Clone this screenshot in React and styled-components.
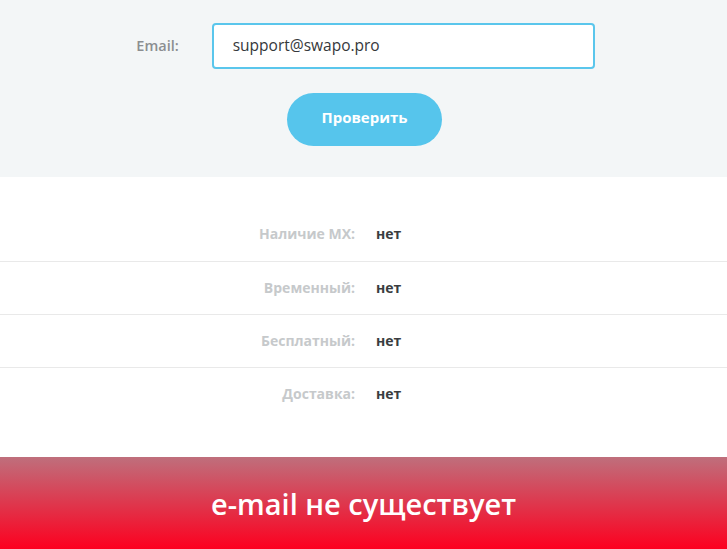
import styled, { createGlobalStyle } from 'styled-components'

const GlobalStyle = createGlobalStyle`
    body {
        margin: 0;
        font-family: 'Open Sans', 'Liberation Sans', sans-serif;
        background: #ffffff;
    }
`

const checks = [
    { label: 'Наличие MX:', value: 'нет' },
    { label: 'Временный:', value: 'нет' },
    { label: 'Бесплатный:', value: 'нет' },
    { label: 'Доставка:', value: 'нет' },
]

export default function App () {
    return (
        <Page>
            <GlobalStyle />
            <FormSection>
                <Field>
                    <Label>Email:</Label>
                    <Input defaultValue="support@swapo.pro" />
                </Field>
                <CheckButton>Проверить</CheckButton>
            </FormSection>
            <Results>
                {checks.map((check, index) => (
                    <Row key={index} first={index === 0}>
                        <RowLabel>{check.label}</RowLabel>
                        <RowValue>{check.value}</RowValue>
                    </Row>
                ))}
            </Results>
            <Banner>e-mail не существует</Banner>
        </Page>
    )
}

const Page = styled.div`
    width: 727px;
    display: flex;
    flex-direction: column;
`

const FormSection = styled.div`
    height: 177px;
    box-sizing: border-box;
    background-color: #f3f6f7;
    padding-top: 23px;
    display: flex;
    flex-direction: column;
    align-items: center;
`

const Field = styled.div`
    display: flex;
    align-items: center;
    gap: 33px;
    margin-left: 4px;
`

const Label = styled.span`
    font-size: 14.5px;
    font-weight: 600;
    color: #8b8e91;
    padding-bottom: 2px;
`

const Input = styled.input`
    width: 383px;
    height: 46px;
    box-sizing: border-box;
    border: 2px solid #5ac6ec;
    border-radius: 4px;
    background: #ffffff;
    padding: 0 19px 2px;
    font-family: 'Open Sans', 'Liberation Sans', sans-serif;
    font-size: 15.5px;
    font-weight: 500;
    color: #35383b;
    outline: none;
`

const CheckButton = styled.button`
    margin-top: 24px;
    margin-left: 2px;
    width: 155px;
    height: 53px;
    padding: 0 0 5px;
    border: none;
    border-radius: 27px;
    background-color: #56c5ec;
    color: #ffffff;
    font-family: 'Open Sans', 'Liberation Sans', sans-serif;
    font-size: 15px;
    font-weight: 700;
`

const Results = styled.div`
    height: 280px;
    box-sizing: border-box;
    padding-top: 31px;
    background: #ffffff;
`

const Row = styled.div`
    display: grid;
    grid-template-columns: 355px 1fr;
    column-gap: 21px;
    align-items: center;
    height: 53px;
    padding-bottom: 2px;
    box-sizing: border-box;
    border-top: ${props => props.first ? 'none' : '1px solid #e9e9e9'};
    font-size: 14px;
    font-weight: 700;
`

const RowLabel = styled.span`
    text-align: right;
    color: #c6c9cb;
`

const RowValue = styled.span`
    color: #3a3d40;
`

const Banner = styled.div`
    height: 92px;
    display: flex;
    align-items: center;
    justify-content: center;
    background: linear-gradient(to bottom, #bf6f7c, #fd001f);
    color: #ffffff;
    font-size: 29px;
    font-weight: 600;
    box-sizing: border-box;
`
